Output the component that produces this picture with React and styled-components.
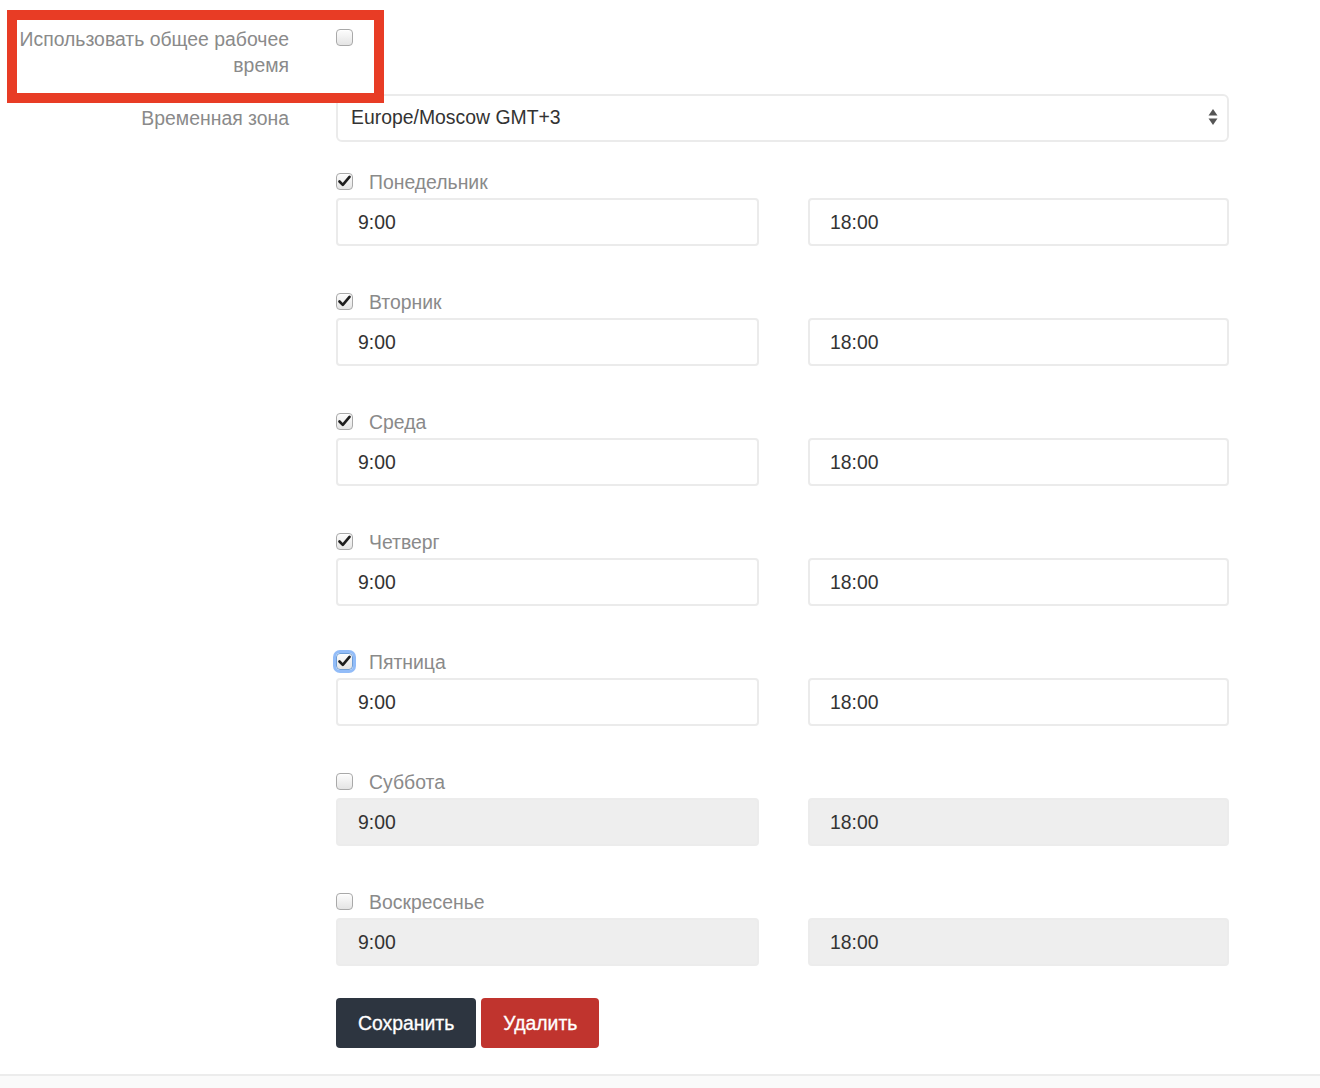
import React from 'react'
import styled, { createGlobalStyle } from 'styled-components';

const GlobalStyle = createGlobalStyle`
  html, body {
    margin: 0;
    padding: 0;
    background: #fff;
    font-family: "Liberation Sans", Arial, sans-serif;
  }
`;

const days = [
  { name: 'Понедельник', on: true },
  { name: 'Вторник', on: true },
  { name: 'Среда', on: true },
  { name: 'Четверг', on: true },
  { name: 'Пятница', on: true, focus: true },
  { name: 'Суббота', on: false },
  { name: 'Воскресенье', on: false },
];

function Check({ checked, focus }) {
  return (
    <Box $focus={focus}>
      {checked && (
        <svg width="13" height="12" viewBox="0 0 13 12">
          <path d="M1.5 6.5 L4.8 9.8 L11.5 1.8" fill="none" stroke="#1e1e1e" strokeWidth="2.6" strokeLinecap="round" strokeLinejoin="round" />
        </svg>
      )}
    </Box>
  );
}

export default function App() {
  return (
    <>
      <GlobalStyle />
      <Page>
        <Form>
          <Highlight />
          <Row>
            <Label>Использовать общее рабочее время</Label>
            <TopCheck>
              <Check checked={false} />
            </TopCheck>
          </Row>

          <Row $mt={16}>
            <Label $center>Временная зона</Label>
            <Select>
              <span>Europe/Moscow GMT+3</span>
              <svg width="10" height="18" viewBox="0 0 10 18">
                <path d="M5 1 L9.5 7.5 L0.5 7.5 Z" fill="#555" />
                <path d="M5 17 L9.5 10.5 L0.5 10.5 Z" fill="#555" />
              </svg>
            </Select>
          </Row>

          <Row $mt={27}>
            <span />
            <Days>
              {days.map((d, i) => (
                <Day key={d.name} $last={i === days.length - 1}>
                  <DayHead>
                    <Check checked={d.on} focus={d.focus} />
                    <DayName>{d.name}</DayName>
                  </DayHead>
                  <Pair>
                    <Field $disabled={!d.on}>9:00</Field>
                    <Field $disabled={!d.on}>18:00</Field>
                  </Pair>
                </Day>
              ))}
              <Buttons>
                <Button $bg="#2d3540">Сохранить</Button>
                <Button $bg="#c0342e">Удалить</Button>
              </Buttons>
            </Days>
          </Row>
        </Form>
        <Footer />
      </Page>
    </>
  );
}

const Page = styled.div`
  width: 1320px;
  height: 1088px;
  display: flex;
  flex-direction: column;
  overflow: hidden;
`;

const Form = styled.div`
  position: relative;
  padding-top: 26px;
  padding-bottom: 26px;
  width: 1229px;
`;

const Highlight = styled.div`
  position: absolute;
  left: 7px;
  top: 10px;
  width: 357px;
  height: 73px;
  border: 10px solid #e83c25;
  pointer-events: none;
`;

const Row = styled.div`
  display: grid;
  grid-template-columns: 289px 1fr;
  column-gap: 47px;
  margin-top: ${(p) => p.$mt || 0}px;
`;

const Label = styled.div`
  text-align: right;
  font-size: 19.4px;
  line-height: 26px;
  color: #8a8a8a;
  padding-left: 10px;
  align-self: ${(p) => (p.$center ? 'center' : 'start')};
`;

const TopCheck = styled.div`
  padding-top: 3px;
`;

const Box = styled.span`
  box-sizing: border-box;
  width: 17px;
  height: 17px;
  border-radius: 4px;
  border: 1px solid ${(p) => (p.$focus ? '#6f9fd8' : '#a9a9a9')};
  background: linear-gradient(#fdfdfd, #e4e4e4);
  box-shadow: ${(p) => (p.$focus ? '0 0 0 3px rgba(110, 165, 245, 0.75)' : 'inset 0 1px 1px rgba(255,255,255,0.8)')};
  display: flex;
  align-items: center;
  justify-content: center;
  flex-shrink: 0;
`;

const Select = styled.div`
  box-sizing: border-box;
  height: 48px;
  border: 2px solid #ebebeb;
  border-radius: 6px;
  display: flex;
  align-items: center;
  justify-content: space-between;
  padding: 0 9px 2px 13px;
  font-size: 19.4px;
  color: #333;
`;

const Days = styled.div`
  display: flex;
  flex-direction: column;
`;

const Day = styled.div`
  margin-bottom: ${(p) => (p.$last ? 32 : 43)}px;
`;

const DayHead = styled.div`
  display: flex;
  align-items: center;
  height: 26px;
  gap: 16px;
  margin-bottom: 3px;
  position: relative;
  top: -1px;
`;

const DayName = styled.span`
  font-size: 19.4px;
  color: #8a8a8a;
  position: relative;
  top: 1px;
`;

const Pair = styled.div`
  display: grid;
  grid-template-columns: 423px 1fr;
  column-gap: 49px;
`;

const Field = styled.div`
  box-sizing: border-box;
  height: 48px;
  border: 2px solid ${(p) => (p.$disabled ? '#ececec' : '#ebebeb')};
  border-radius: 4px;
  background: ${(p) => (p.$disabled ? '#eeeeee' : '#fff')};
  display: flex;
  align-items: center;
  padding-left: 20px;
  font-size: 19.4px;
  color: #333;
`;

const Buttons = styled.div`
  display: flex;
  gap: 5px;
`;

const Button = styled.button`
  height: 50px;
  border: none;
  border-radius: 4px;
  background: ${(p) => p.$bg};
  color: #fff;
  font-family: "Liberation Sans", Arial, sans-serif;
  font-size: 19.4px;
  padding: 0 22px;
  -webkit-text-stroke: 0.3px #fff;
`;

const Footer = styled.div`
  flex: 1;
  border-top: 2px solid #ececec;
  background: #fafafa;
`;
